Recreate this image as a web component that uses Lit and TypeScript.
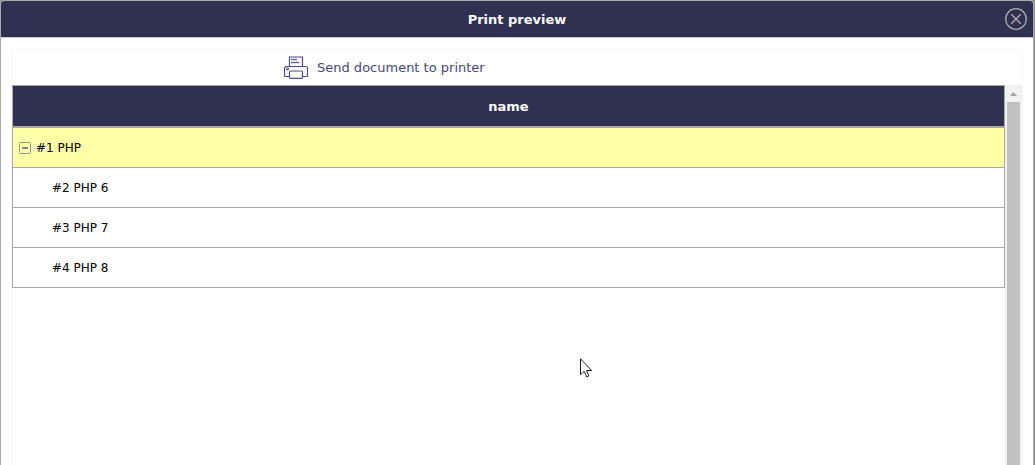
import { LitElement, html, css, svg } from "lit";
import { customElement, state } from "lit/decorators.js";

interface Item {
  id: number;
  name: string;
}

@customElement("print-close-icon")
class PrintCloseIcon extends LitElement {
  static styles = css`
    :host, svg { display: block; }
  `;
  render() {
    return html`<svg width="22" height="22" viewBox="0 0 22 22" fill="none" stroke="#a9a9ab" aria-hidden="true">
      <circle cx="11" cy="11" r="10.3" stroke-width="1.3" />
      <path d="M6.3 6.3 15.7 15.7M15.7 6.3 6.3 15.7" stroke-width="1.4" />
    </svg>`;
  }
}

@customElement("print-printer-icon")
class PrintPrinterIcon extends LitElement {
  static styles = css`
    :host, svg { display: block; }
  `;
  render() {
    return html`<svg width="24" height="23" viewBox="0 0 24 23" fill="none" stroke="#4a4a98" aria-hidden="true">
      <path d="M5.5 10.5v-9.500h13v9.500" stroke-width="1.2" />
      <path d="M7 3.500h6M7 6.500h8.500" stroke="#6c6cac" stroke-width="1.3" />
      <path d="M5.500 20.500h-4a1 1 0 0 1-1-1v-7a2 2 0 0 1 2-2h19a2 2 0 0 1 2 2v7a1 1 0 0 1-1 1h-4" stroke-width="1.2" />
      <circle cx="3.500" cy="13" r="1" stroke="#303080" />
      <rect x="5.500" y="15" width="13" height="7.300" rx="1" fill="#fff" stroke-width="1.2" />
    </svg>`;
  }
}

@customElement("app-root")
class AppRoot extends LitElement {
  @state() private expanded = true;

  private versions: Item[] = [
    { id: 2, name: "PHP 6" },
    { id: 3, name: "PHP 7" },
    { id: 4, name: "PHP 8" },
  ];

  static styles = css`
    :host {
      display: block;
      position: relative;
      box-sizing: border-box;
      height: 100vh;
      overflow: hidden;
      padding-right: 1px;
      background: #8d8d8d;
      font-family: Verdana, "DejaVu Sans", sans-serif;
      font-size: 12px;
      color: #000;
    }
    button {
      border: 0;
      padding: 0;
      background: none;
      font: inherit;
      color: inherit;
      cursor: pointer;
    }
    .dialog {
      display: flex;
      flex-direction: column;
      box-sizing: border-box;
      height: 100%;
      border: 1px solid #aaa;
      border-bottom: 0;
      border-radius: 4px 4px 0 0;
      background: #fff;
      overflow: hidden;
    }
    .titlebar {
      display: grid;
      grid-template-columns: 28px 1fr 28px;
      align-items: center;
      height: 36px;
      border-bottom: 1px solid #c9c9d1;
      background: #303050;
      color: #fff;
    }
    .title {
      grid-column: 2;
      margin: 0;
      padding-top: 2px;
      text-align: center;
      font-size: 13px;
      line-height: 16px;
      font-weight: bold;
    }
    .panel {
      flex: 1;
      min-height: 0;
      display: flex;
      flex-direction: column;
      margin: 10px 10px 0;
      border: 1px solid #f8f8f8;
      border-bottom: 0;
    }
    .toolbar {
      display: flex;
      align-items: center;
      height: 36px;
      padding-left: 272px;
    }
    .print {
      display: flex;
      align-items: center;
      gap: 9px;
      font-size: 13px;
      color: #484878;
    }
    .view {
      flex: 1;
      min-height: 0;
      display: flex;
    }
    .content {
      flex: 1;
    }
    table {
      width: 100%;
      border: 1px solid #a8a8a8;
      border-bottom: 0;
      border-spacing: 0;
    }
    th, td {
      padding: 0 6px;
      height: 39px;
      border-bottom: 1px solid #a8a8a8;
    }
    th {
      height: 40px;
      border-bottom-width: 2px;
      background: #303050;
      color: #fff;
      font-size: 13px;
    }
    .parent {
      background: #ffffa8;
    }
    .node {
      display: flex;
      align-items: center;
      gap: 5px;
    }
    .child {
      padding-left: 39px;
    }
    .toggle svg, .scroll svg {
      display: block;
    }
    .scroll {
      display: flex;
      flex-direction: column;
      width: 17px;
      background: #f1f1f1;
    }
    .thumb {
      flex: 1;
      margin: 0 2px;
      background: #c1c1c1;
    }
    .cursor {
      position: absolute;
      left: 580px;
      top: 358px;
    }
  `;

  private toggle() {
    this.expanded = !this.expanded;
  }

  render() {
    return html`
      <section class="dialog" role="dialog" aria-labelledby="title">
        <header class="titlebar">
          <h1 class="title" id="title">Print preview</h1>
          <button class="close" aria-label="Close"><print-close-icon></print-close-icon></button>
        </header>
        <div class="panel">
          <div class="toolbar">
            <button class="print">
              <print-printer-icon></print-printer-icon>
              <span>Send document to printer</span>
            </button>
          </div>
          <div class="view">
            <div class="content">
              <table>
                <thead>
                  <tr><th scope="col">name</th></tr>
                </thead>
                <tbody>
                  <tr>
                    <td class="parent">
                      <div class="node">
                        <button class="toggle" aria-label="Toggle PHP" aria-expanded=${this.expanded} @click=${this.toggle}>
                          <svg width="12" height="12" viewBox="0 0 12 12" aria-hidden="true">
                            <rect x=".5" y=".5" width="11" height="11" rx="1" fill="none" stroke="#92928c" />
                            <path d="M3 6h6" stroke="#85858c" stroke-width="2" />
                            ${this.expanded ? null : svg`<path d="M6 3v6" stroke="#85858c" stroke-width="2" />`}
                          </svg>
                        </button>
                        <span>#1 PHP</span>
                      </div>
                    </td>
                  </tr>
                  ${this.expanded
                    ? this.versions.map((c) => html`<tr><td class="child">#${c.id} ${c.name}</td></tr>`)
                    : null}
                </tbody>
              </table>
            </div>
            <div class="scroll">
              <button aria-label="Scroll up">
                <svg width="17" height="17" viewBox="0 0 17 17" aria-hidden="true">
                  <path d="M5 11h7L8.500 7z" fill="#a3a3a3" />
                </svg>
              </button>
              <div class="thumb"></div>
            </div>
          </div>
        </div>
      </section>
      <svg class="cursor" width="13" height="20" viewBox="0 0 13 20" aria-hidden="true">
        <path d="M.5.8v16l3.700-3.500 2.500 5.500 2.300-1-2.500-5.300h5.200z" fill="#fff" stroke="#1c1c2c" />
      </svg>
    `;
  }
}
